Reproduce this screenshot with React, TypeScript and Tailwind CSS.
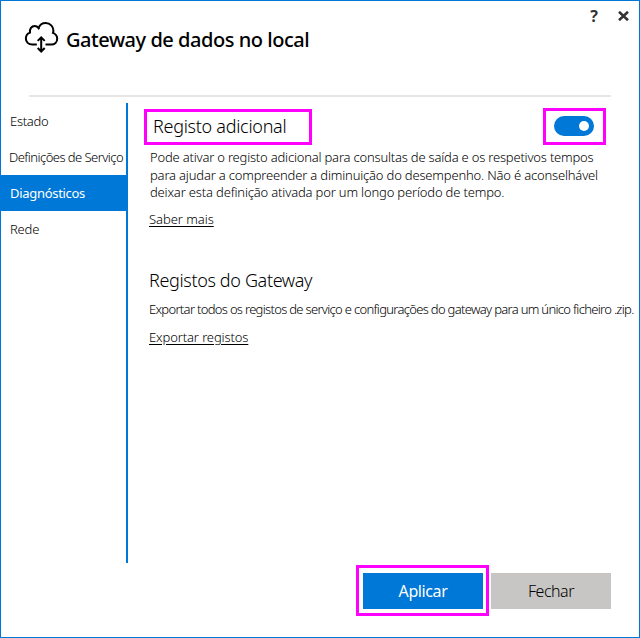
import React from "react";

const navItems = [
  { label: "Estado", tone: "text-black pl-[9px]", tracking: "tracking-[-0.3px]" },
  { label: "Definições de Serviço", tone: "text-black pl-[8px]", tracking: "tracking-[-0.54px]" },
  { label: "Diagnósticos", tone: "bg-[#0078d7] text-white pl-[9px] font-normal", tracking: "tracking-[-0.3px]" },
  { label: "Rede", tone: "text-black pl-[9px]", tracking: "tracking-[-0.2px]" },
];

function CloudIcon() {
  return (
    <svg
      className="h-[34px] w-[36px] shrink-0"
      viewBox="24 20 36 34"
      fill="none"
      stroke="#000"
      strokeWidth="2"
    >
      <path d="M36.8 44.6H32.3C28.4 44.6 25.9 42 25.9 38.6C25.9 35.6 27.6 33.4 30 32.6C29.4 28.9 31.6 26 34.7 26C36.2 26 37.5 26.7 38.6 28C39.6 25.1 42.5 23.1 45.7 23.1C50.3 23.1 53.4 26.6 53.4 30.6C53.4 31.4 53.3 32.2 53 32.9C55.6 33.9 57.2 36 57.2 38.8C57.2 42.2 54.7 44.6 51.3 44.6H45.5" />
      <path d="M38.6 28L39.2 28.9M41.2 37.6V51.3M37.7 40.9L41.2 37.4L44.7 40.9M37.7 48L41.2 51.5L44.7 48" />
    </svg>
  );
}

export default function App() {
  return (
    <div className="flex h-[638px] w-[640px] flex-col overflow-hidden border border-[#0078d7] bg-white font-['Noto_Sans',sans-serif] text-[13px] font-light text-black">
      <header className="flex h-[94px] shrink-0 justify-between">
        <div className="flex pl-[23px] pt-[19px]">
          <CloudIcon />
          <h1 className="ml-[6px] mt-[6px] whitespace-nowrap text-[20px] font-medium leading-[28px] tracking-[-0.46px]">
            Gateway de dados no local
          </h1>
        </div>
        <div className="flex items-start gap-[20px] pr-[10px] pt-[5px] text-[#333]">
          <button className="text-[16px] font-bold leading-[20px]">?</button>
          <button className="pt-[5px]" aria-label="Fechar janela">
            <svg className="h-[10px] w-[11px]" viewBox="0 0 11 10" stroke="#333" strokeWidth="2.6">
              <path d="M1 .8L10 9.2M10 .8L1 9.2" />
            </svg>
          </button>
        </div>
      </header>
      <div className="ml-[28px] h-[2px] w-[582px] shrink-0 bg-[#e6e6e6]" />

      <div className="mt-[6px] flex h-[460px] shrink-0">
        <nav className="flex w-[127px] shrink-0 flex-col border-r-2 border-[#0078d7]">
          {navItems.map((item) => (
            <a key={item.label} className={`block h-[36px] whitespace-nowrap leading-[37px] ${item.tone} ${item.tracking}`}>
              {item.label}
            </a>
          ))}
        </nav>

        <main className="flex grow flex-col whitespace-nowrap pl-[21px]">
          <div className="-ml-[5px] mt-[5px] flex h-[37px] w-[462px] items-end justify-between">
            <h2 className="h-[36px] w-[168px] border-[3px] border-[#ff00ff] pl-[6px] text-[18px] leading-[29px] tracking-[-0.28px]">
              Registo adicional
            </h2>
            <div className="flex h-[37px] w-[63px] items-center justify-end border-[3px] border-[#ff00ff] pr-[9px] pb-[1px]">
              <div className="flex h-[20px] w-[40px] items-center justify-end rounded-full bg-[#0078d7] pr-[5px]">
                <span className="h-[10px] w-[10px] rounded-full bg-white" />
              </div>
            </div>
          </div>
          <div className="mt-[4px] pl-[1px] leading-[17.5px]">
            <p className="tracking-[-0.2px]">Pode ativar o registo adicional para consultas de saída e os respetivos tempos</p>
            <p className="tracking-[-0.18px]">para ajudar a compreender a diminuição do desempenho. Não é aconselhável</p>
            <p className="tracking-[-0.17px]">deixar esta definição ativada por um longo período de tempo.</p>
          </div>
          <a className="mt-[8px] w-fit leading-[18px] tracking-[-0.05px] underline underline-offset-2">Saber mais</a>
          <h2 className="mt-[38px] text-[18px] leading-[28px] tracking-[-0.35px]">Registos do Gateway</h2>
          <p className="mt-[6px] leading-[18px] tracking-[-0.69px]">
            Exportar todos os registos de serviço e configurações do gateway para um único ficheiro .zip.
          </p>
          <a className="mt-[10px] w-fit leading-[18px] tracking-[-0.12px] underline underline-offset-2">Exportar registos</a>
        </main>
      </div>

      <footer className="mt-[2px] flex h-[51px] shrink-0 pl-[355px] text-[16px]">
        <div className="h-[51px] w-[133px] border-[3px] border-[#ff00ff] pl-[4px] pt-[5px]">
          <button className="block h-[36px] w-[120px] bg-[#0078d7] font-normal leading-[37px] tracking-[-0.4px] text-white">Aplicar</button>
        </div>
        <button className="ml-[2px] mt-[8px] h-[36px] w-[120px] bg-[#c8c6c4] leading-[37px] tracking-[-0.5px]">Fechar</button>
      </footer>
    </div>
  );
}
